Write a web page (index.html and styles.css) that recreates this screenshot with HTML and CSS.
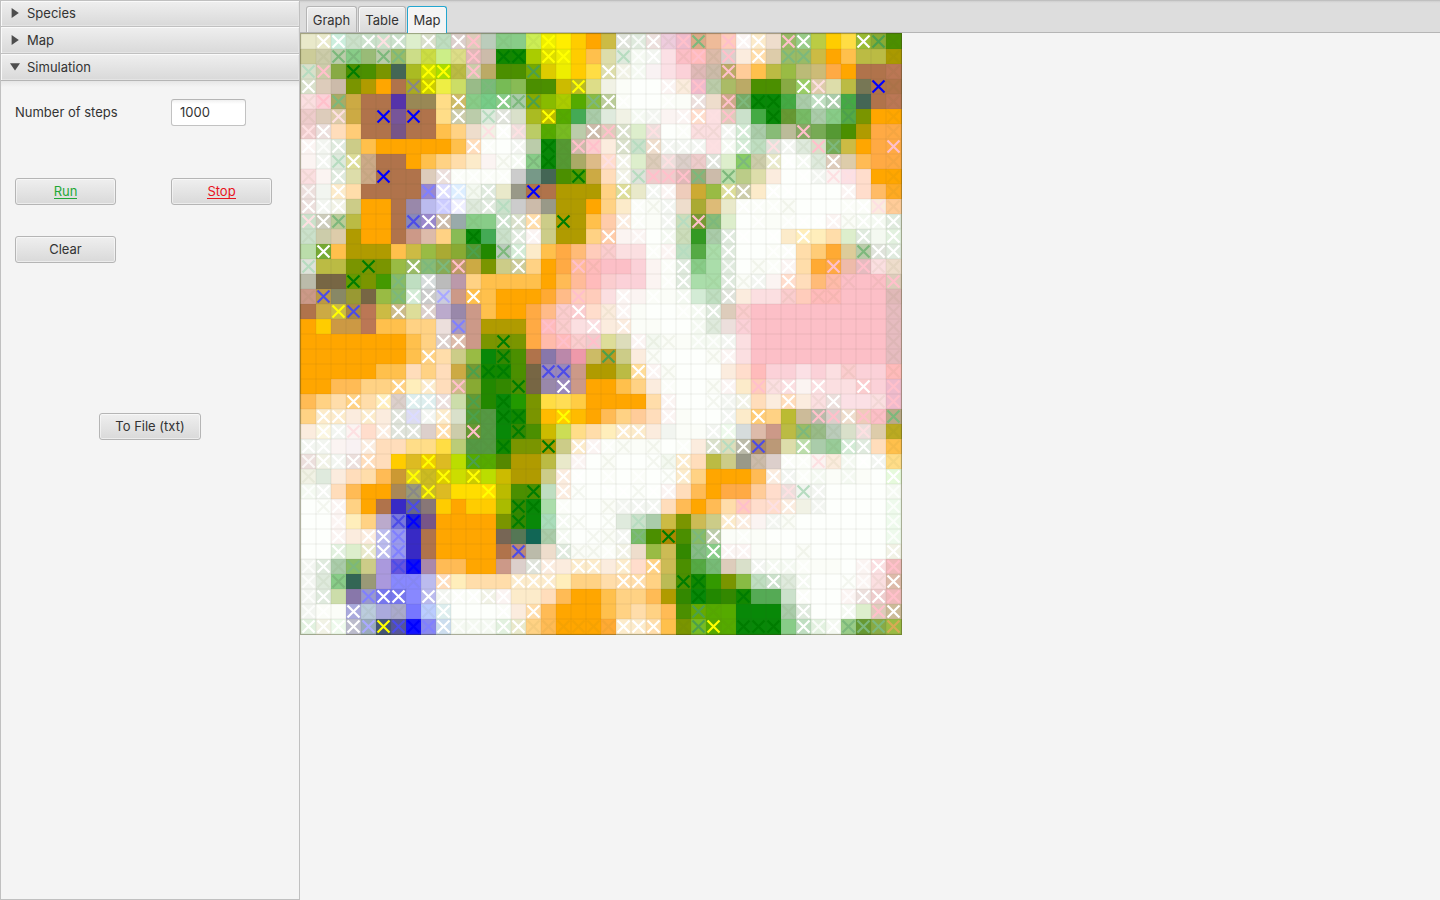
FILE: index.html
```html
<!DOCTYPE html>
<html lang="en">
<head>
<meta charset="utf-8">
<title>Simulation</title>
<link rel="stylesheet" href="styles.css">
</head>
<body>
<div class="app">
  <aside class="sidebar">
    <div class="pane-title first"><svg class="arrow" viewBox="0 0 10 10"><path d="M1.6 0 L8.8 5 L1.6 10Z"/></svg><span>Species</span></div>
    <div class="pane-title"><svg class="arrow" viewBox="0 0 10 10"><path d="M1.6 0 L8.8 5 L1.6 10Z"/></svg><span>Map</span></div>
    <div class="pane-title open"><svg class="arrow" viewBox="0 0 10 10"><path d="M0 1.3 H10 L5 8.5Z"/></svg><span>Simulation</span></div>
    <div class="pane-body">
      <div class="row steps"><label for="steps">Number of steps</label><input id="steps" class="field" type="text" value="1000"></div>
      <div class="row actions"><button class="btn run"><span>Run</span></button><button class="btn stop"><span>Stop</span></button></div>
      <div class="row"><button class="btn">Clear</button></div>
      <div class="row export"><button class="btn file">To File (txt)</button></div>
    </div>
  </aside>
  <main class="content">
    <nav class="tabs"><div class="tab graph">Graph</div><div class="tab table">Table</div><div class="tab map active">Map</div></nav>
    <canvas id="map" class="world" width="602" height="602"></canvas>
  </main>
</div>
<script src="map.js"></script>
</body>
</html>
```
FILE: styles.css
```css
* { box-sizing: border-box; }
body { margin: 0; background: #f4f4f4; font: 13px/16px Inter, "Liberation Sans", sans-serif; color: #333; }
.app { display: flex; width: 1440px; height: 900px; overflow: hidden; }
.sidebar { width: 300px; height: 900px; border: 1px solid #c0c0c0; display: flex; flex-direction: column; }
.pane-title { height: 27px; display: flex; align-items: center; gap: 7px; padding: 0 0 0 9px; background: linear-gradient(#efefef, #d9d9d9); border-bottom: 1px solid #c0c0c0; box-shadow: inset 1px 1px #fafafa, inset -1px -1px #e4e4e4; flex: none; }
.pane-title.first { height: 26px; padding-bottom: 1px; }
.pane-title.open { border-bottom-color: #b5b5b5; }
.arrow { width: 10px; height: 10px; fill: #4d4d4d; flex: none; }
.pane-body { flex: 1; padding: 18px 14px 0; background: linear-gradient(#e6e6e6, #f4f4f4 6px); }
.row { display: flex; align-items: center; gap: 55px; }
.steps label { width: 101px; padding-bottom: 2px; white-space: nowrap; }
.field { width: 75px; height: 27px; padding: 0 8px 1px; border: 1px solid #c2c2c2; border-top-color: #b5b5b5; border-radius: 3px; background: linear-gradient(#f0f0f0, #fff 4px); font: inherit; color: #333; }
.actions { margin: 52px 0 31px; }
.btn { width: 101px; height: 27px; padding: 0 0 2px; border: 1px solid #b5b5b5; border-radius: 3px; background: linear-gradient(#efefef, #d9d9d9); box-shadow: inset 0 0 0 1px rgba(255,255,255,.5); font: inherit; color: #333; }
.btn span { display: inline-block; height: 16px; border-bottom: 1px solid; }
.btn.run { color: #1fa836; }
.btn.stop { color: #e8131d; }
.export { justify-content: center; margin-top: 150px; }
.file { width: 102px; }
.content { flex: 1; display: flex; flex-direction: column; align-items: flex-start; }
.tabs { width: 100%; height: 33px; flex: none; display: flex; align-items: flex-end; gap: 1px; padding-left: 6px; background: linear-gradient(#cfcfcf, #dddddd 2px, #dddddd); border-top: 1px solid #c0c0c0; border-bottom: 1px solid #b5b5b5; }
.tab { height: 26px; padding-top: 5px; text-align: center; border: 1px solid #b5b5b5; border-bottom: 0; border-radius: 3px 3px 0 0; background: linear-gradient(#eeeeee, #dadada); box-shadow: inset 1px 1px #f8f8f8; }
.graph { width: 51px; }
.table { width: 48px; }
.map { width: 40px; }
.tab.active { height: 27px; margin-bottom: -1px; border-color: #22a6cf; background: #f4f4f4; }
.world { display: block; width: 602px; height: 602px; }
```
FILE: map.js
```js
// One token per cell: three hex digits for the fill, an optional letter for the cross.
const rows = [
"eec eecw cedw cdcs cdcw cdcq cdcw dec ddcw bdbs dccw dcbp bcb 8c8s 8c8 ce5s ee0y fe0 fc0 fa0 cb4 dddw dedv eddw ecds ebcp da8h eb9 fcbp feew fecw edc 9b6p 9c8w bc4 fc0 fd4 9b3w 8a3k 480s",
"cc9 ccas bcah 8c8h 9b7 bcah 9b6h cd8 cd4s ce8 dd8s dbbp cba 180g 180g ac0 dd0y ee0y fc0 fb4 dda dedi efev eeew fde fbcs fbbp dbas dccp fed fdaw dca 9b6h 9b6h cb4 fa0 fb4 bb4 bb4 a90s",
"ddci ccap 8a4 480g 480 790 465 ab2 cd0y ad0y bb4s ccap ba6 480 480 7a0k dc0 ee0 fc0 fd4 ddaw eedv efev fef fde fcd dbbs cbas ba6p fc9 fb4 bb4 9b4 bb7 cb7 fa4 fa0 b74 b74 b75s",
"ddcw dcb cba 790 b90 fa0 b74 aa2n cc0y ee4 cd6 9b8 7b7h 7b5 8b5 480 480 cb0 bb2y dd8 eed ffe fff fff feew feds ebcp bcas ab6 ba6 480 480 8a4 9c6w dcaq dda bb4 775 b74b b74s",
"fdds fcdp aa6h ca4 b74 b74 53a 985 985 fd8 cb6w 8c8s 7c8s 8c8w acah 8a0k 8b0 ac0s 5a0 8b4h bc9w ffev fff fff ffev ffe eddw edc ca8p 7a6h 080g 080g 4a4s acas bdbw acaw 4a4k 465 b74 b75s",
"eccs dcb dcaq ca4 b74 b74b 759 b74b b74 fd8 ccaw bca dedi dddw ddc ab2 bb0y 5a0s 4a5 acas ded eed efev eeev fee feew fdcw fddq dcbp cdc 4a4 080g 693s 7b6s acas 8c8s 5a4k 790 fa0 fa0s",
"eccq eddw fdb fc7 b74 b74 758 b74 b74 fb4 fc8 edc eedq ffew eddq bc6 5a0s 7b2s bca cbaw dcbp ddcw dec eddq fff ffev fdds fdds eeew cecw acas 8b7 bb9 8a6p 7a5 593 480 b90 fa4 fa4s",
"feew eeev dedw cc8 fb4 fa0*5 fb4 fdbw ffev fff eeew bca 080g 593s cbap fccp fed ddcw cdci edcw eeew eeew eeew fddq efew cecw bdbs dddq eeew deds ddcp 7a5h cb4 fa0 fa4 fa4p",
"fee eeew dedi dd9w ca8s b74 b74 fa0 fb4 fc8 fda fec fee ffes efew 8c8h 080g 593s aa6 db8 fdcq eedw dec dcbs eddq dccs eccs dddw dec 8c6h ccas eecw fffw efew deds dcbw dca fb5 fa4 fa4s",
"fdds fee dedw dda ca8s b74b b74 b74 dcb eddw ffev ffev ffev ffev ccc 798 465 480 590g ca4 fdb eedw dddi eccp eccp dbbp 9a7h cba bdah bc8 dda fed fff fffv eeev feeq fdeq fdc fa0 fa0s",
"eddv eee fecw fda b74*4 98cd ddfw defv efes dedw eec 998 b74b b74 b90 b90 b90 fc8 dd9w eec eeew feew ecb ca3 9b4 dd9w ccaw fec ffew fffv fff fff fff feew fdc fb6 fa2s",
"eddw eeew eedw cc8 fa0 fa0 b74 98a bbe ccfe eefw deds dedw cdci ccc cba 998 b90 b90 fa0 fc8 fec ffev ffes eeew edc aa3 db7 eec ffew ffev ffev ffes fff fff fff ffev ffew fedq fc9s",
"cdcq ccbw bc9h bb4 fa0 fa0 b74 88bc 98cw cbaw 9aa 8c8s 8c8 cdcw ddcw fdaw cc8 b90g b90 fb4 fca fedw ffev ffe eeew cdbi 793p 8b7h dec fff ffev ffe ffev fffv fffv feew ffes efew efew dedw",
"cdcs cca dca b90 fa0 fa0 b74 c98 dba fc8 8b5 080g 4a5 cdcs dedw feew cc8 b90 b90 fc8 fcaw fee feev fff efew cdbs 392 acas dedw fffv fff fffv fec febw feb fda dec dedw efe dfdw",
"bda 7a3w fb4 b90 b90 b90 fb4 cb4 9b4 aa3 8a3 593k 280 bcbh cecw fec fb4 fa4 fb7 fcb fccs fdd fdd ffev feev bdbi 5a4 adas dedw fff fff ffev ffew fda fc7 fa3 dc9 bcah dddw dedw",
"dddi bb4 bb4 790 790g 790 9b4 9b6w 8b7h 8a5h b96p ca4 790 cc8 cc9w fc8 fa0 fa4 fb9p fbbs fbc fbc fcd fee ffev dedw 8c8s ada dedv fff ffes ffev feew fda fa3 fa4p eba dbcp fdds edcs",
"bba 764 764 690g 790 490 8b6h bdb cddw bbb b9a fc8 fb4*4 fa0 fb5 fb9 fbb fcc fcd fcd fee ffev dedw ada adas dedw ffes eeew fee fdcw fdb fb7 fbas fbcs fbc fbcs dcbp",
"c98s b94c 886 993 764 9b4 8b6h cecw cccw ccdr c98 fb4w fb4 fa0*3 fa3 fb8 fcbp fcb fdd feew fee ffev ffe efew cec bdbs dddw fed fdd fdd fccs fcb fbbs fbbs fbc fbc fbc dbbs",
"b74 ca4 cb4y a84c b75 cb4 cb8w dd9 dccw bac 98a c98 fb4 fa0 fa0 fa4 fb8 fccs fccw fdc feds feew ffe fff fff ffev efew dedw dcb fccs fbc*9 dbcs",
"fa0 fc0 c94 c94 b75 fb4 fb4 fc8 fc8 edd a9bd c98 b90*3 fa4 fbbp fccs fdd fddw fed fedw ffe ffe fff fff efev deds edd fcds fbc*9 dbcs",
"fa0*7 fb4 fc8 dccw dbaw c98 790 790g 790 fa4 fba fbbp fccs eccp dd9 ddb feew efes ffes ffe efev efev eeew fdd fbc*9 dbcs",
"fa0*7 fb4 fc8w fda cc8 9b4 080 380g 480 b74 87a b8a e9a cb6 b92k cc8 fed ffes fff fff fff ffes feew fdd fbc*9 dbcs",
"fa0*5 fb4 fb4 fdb fc8 fdb ca4 793k 180g 180g 480 764 98bc 98bc c98 b90 b90 bb4 fd9w feew ffes fff fff fff fed fdc fbb fcd fcd fde fcd fdd fccs fcd fcd fbbs",
"fa0 fa0 fb5 fb5 fc8 fc8 fc8w feb fecw fdb cb8p 8a3 280 380 480g 764 98a 98bw c98 fa0 fa0 fb4 fc8 fed ffev fff fff ffes feew fec fcbp fdds fddw fee fddw fdd fdd fccw fcd ebcp",
"fb5 fc8 fda fc8w fda febw dccs deew deew eddw cda 693k 280 080g 290 790 fd4 fd5 fc4 fa0 fa0 fa0 fa0 fda feew fff fff fffs eeev eedw fdb fed fdbw fed fdds eddw fde fde fdds ebcp",
"fc8 fecw fecw fed fecw fed dddw ddee eeew fecw ddc 593k 594s 080g 180g 790 fb0 fc0y fb0 fa0 fb5 fc8 fc9 fdb feew ffe fff fff eeew fec fc7w fc8 bb3 cb9 bbap dccp edcw ecbp fbcs ba8h",
"fed ffdw eeew feeq fdc fedw dddw dddw dcc fdaw cca 693p 594s 080 380g 480 cb0 cd5 fd8 fda feb fecw fecw fed eee ffe ffe eeew efdw cdd dba c98 bb4 9b6h 9b8s bcbs ddc eddq dca ba2s",
"eeew eeew fee fef fedw fdb fdb fd8 fd8 fd4 bc7 594s 594s 180g 790 790 a90g cc8 fecw feew ffev ffes ffe ffes fff ffev fed ddcw ddbi bbaw a86c b97 dda bdaw aca 9c9s cecw dedw fdb fb4s",
"eddv eedw eeew eddw fdbw fdb fc0 db2 ec0y db2 bd0 5a0k 5a0s 580 b90 b90 bb4 eec feev fff ffes fff fff fffs efes fecw fdb bb4 cc8 998 cbas dcc ffew ffev feeq feds efev fffv eeew fd8s",
"eeds ded fed fdb fda fb5 c93 dc2y cb2s dc0y cd0 cc0y bd0 cb0 b90 b90 cc8 fedw fffv fff ffev fff ffev fff fffs fecw fc8 fa0 fa0 fa0 fb5 fedw eeew ffev efev ffe efev ffe fff dfcw",
"efev eeew fdb fb5 fa0 fa0 a85 997n cb2y db2 fd0 fd0 fd0y bb0 480 480g bdb fedw fffs fff fffv fffv fffs fffv feew fdb fb5 fa0 fa4 fa4 fc9 fdc eddq eeei eeew fff*4 efev",
"fff fffs feew fc8 fa0 b74 32c 668c 877 fc0 fa0 fc0 fc0 ab0 380g 080g ada ffev fff fff ffes eeev eeew eeew fdb fb5 fa0 fb5 fda fcbp fdc fdcq fedw eed eeev fff*4 efdv",
"fff fff feev feb fc8 bac 77dc 22cb 758 fa0*4 790 380g 080 adbs efew fffs fff fffs ded cdci aca cb4 790 cb5 cc8 fecw fedw fee eeev ffes fff*6 efdv",
"fff fff feew fed fedw bbew 99ed 33c b74 fa0*4 765 575 165 acas efew fff fffs ffes eeew 7b6h 480 a80g 480 8b6h bcaw ffe ffev ffe fff*8 efdv",
"fff fff dfdw dec eecw bbew 99ed 33c b74 fa0*4 b74 b87c bba edc dedw ffes ffes ffev eedw edc 9b4 cb5 380 8b8h 8c8w feew feew ffe ffe fff ffes fff*5 eedw",
"eeev dedw acas 8b6h cc8 a9d 65dc 11eb a8a fb5 fb5 fa0 fa0 c98 dcc dddw fedw fed fecw fecw fed fecw fdc fc8w cb5 480 5a4s 7b7s dcb ddc eeew efew efev ffev ffe ffe fff feev fddw ebbp",
"eeev deds 8c8h 365 997 a9d 88fs 88fs bbe fdbw feb fda fda fda fecw fecw fecw feb fc8 fc8 fda fdaw fdaw fc8 bb5 480g 180g 390 790 8b4 bdbs cdcw deds efew fff fff fffs feev fdds dbaw",
"eeev dedw cda 87a 99cd 77ew 77ew 88f bbew eeew ffew ffew eedw feew fec fec fdb fb5 fa0 fa0 fb4 fc8 fc8 fb5 b90 380 080g 280 380 180g 5a5 5a5 cdc ffew fff fff feev eddw eccw ebbp",
"eeev ffev ffe aadw bcds aad aacs 77f bcfs deew fff fff fff ffew fed fdaw fb5 fa0*3 fb4 fc8 fda fc8 fb5 480 6a0k 5a0s 5a0 080 080 080 acas dedw fff fff efew dec dcbp cb9w",
"dfdw eedw efdw bbcw 9abr 457y 559c 11fb 88ed cdew efev efev efev dfdw eecw fc8s fb5s fa0s fa0s fa0s fa3s fecw fecw fdaw fb4 790s 7b2k 5a0y 5a0s 080g 080g 080g 8c8 bdbw dfdv efew 9c8h 693h 8a4h 9b4o"
];
const fills = {
  fa0: "#ffa600", b74: "#b0734b", "080": "#088808", fbc: "#fcbfc7", fff: "#fdfffc", b90: "#b09b00",
  "480": "#4b8f00", "790": "#7a9500", fb4: "#ffc04c", fc8: "#ffd284", ffe: "#fbfdf8", "32c": "#382ac5", "33c": "#382ac5",
  fdd: "#fbdfe1", fee: "#fbf4f2", eee: "#f2f5f0", ded: "#dfeadd", efe: "#f4f9f1", dfd: "#e2f1df", ddd: "#dfe3da",
  efd: "#eefaec", fde: "#fbe0e5", fef: "#f9f2f3", fcd: "#fbd1d8", dbb: "#e0b9b8", dbc: "#e6bcc0", eed: "#f1f2e5",
  fec: "#fcebca", ffd: "#fbf6e0", eec: "#e9e9ca", cdd: "#d6dcdc", edd: "#ecdfdc", dfc: "#e6fadc", cec: "#d3ebd5",
  fed: "#fbecde", ffb: "#fbf3c8", cdc: "#cbe1cb", ddc: "#d9e0ca", bdb: "#bfdec1", dcc: "#dccfcb", fcc: "#fbcdcf"
};
const marks = { w: "#fff", v: "rgba(255,255,255,.75)", p: "#ffc0cb", q: "#fde0e2", y: "#ff0", g: "#007c00", h: "#7db87c", i: "#b7dcc0", k: "#4ca04c", b: "#00f", c: "#4c4ce8", d: "#8080ff", r: "#a9a9ff", e: "#dcdcff", n: "#888", s: "rgba(90,100,40,.06)", o: "#d8aa55" };
const ctx = document.getElementById("map").getContext("2d");
rows.forEach((row, r) => {
  const cells = [];
  row.split(" ").forEach(t => {
    const [cell, n] = t.split("*");
    for (let i = 0; i < (n || 1); i++) cells.push(cell);
  });
  cells.forEach((cell, c) => {
    const x = 1 + c * 15, y = 1 + r * 15, hex = cell.slice(0, 3);
    ctx.fillStyle = fills[hex] || "#" + hex;
    // Edge cells extend under the one-pixel rim.
    ctx.fillRect(x - (c === 0), y - (r === 0), 15 + (c === 0) + (c === 39), 15 + (r === 0) + (r === 39));
    ctx.fillStyle = "rgba(70,60,40,.042)";
    ctx.fillRect(x, y, 15, 1);
    ctx.fillRect(x, y, 1, 15);
    ctx.fillRect(x + 14, y, 1, 15);
    ctx.fillRect(x, y + 14, 15, 1);
    if (cell[3]) {
      ctx.strokeStyle = marks[cell[3]];
      ctx.lineWidth = 2.2;
      ctx.beginPath();
      ctx.moveTo(x + 1.5, y + 1.5); ctx.lineTo(x + 13.5, y + 13.5);
      ctx.moveTo(x + 13.5, y + 1.5); ctx.lineTo(x + 1.5, y + 13.5);
      ctx.stroke();
    }
  });
});
ctx.strokeStyle = "rgba(60,60,20,.4)";
ctx.lineWidth = 1;
ctx.strokeRect(.5, .5, 601, 601);
```
